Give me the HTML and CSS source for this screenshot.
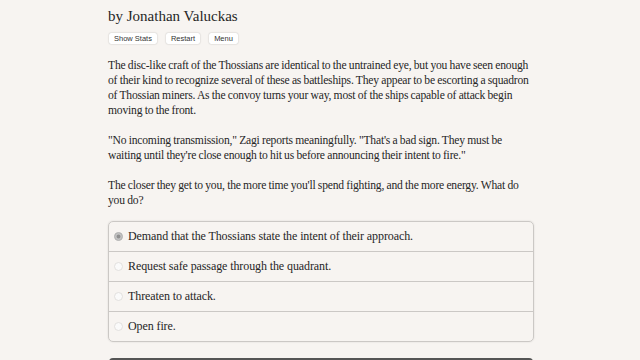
FILE: index.html
```html
<!DOCTYPE html>
<html>
<head>
<meta charset="utf-8">
<link rel="stylesheet" href="styles.css">
</head>
<body>
<div class="page">
  <div class="author">by Jonathan Valuckas</div>
  <div class="buttons">
    <button class="btn">Show Stats</button>
    <button class="btn">Restart</button>
    <button class="btn">Menu</button>
  </div>
  <div class="text">
    <p>The disc-like craft of the Thossians are identical to the untrained eye, but you have seen enough of their kind to recognize several of these as battleships. They appear to be escorting a squadron of Thossian miners. As the convoy turns your way, most of the ships capable of attack begin moving to the front.</p>
    <p>"No incoming transmission," Zagi reports meaningfully. "That's a bad sign. They must be waiting until they're close enough to hit us before announcing their intent to fire."</p>
    <p>The closer they get to you, the more time you'll spend fighting, and the more energy. What do you do?</p>
  </div>
  <div class="choices">
    <div class="choice"><span class="radio selected"></span><span>Demand that the Thossians state the intent of their approach.</span></div>
    <div class="choice"><span class="radio"></span><span>Request safe passage through the quadrant.</span></div>
    <div class="choice"><span class="radio"></span><span>Threaten to attack.</span></div>
    <div class="choice"><span class="radio"></span><span>Open fire.</span></div>
  </div>
  <div class="next"></div>
</div>
</body>
</html>
```

FILE: styles.css
```css
html, body {
  margin: 0;
  padding: 0;
  background: #f7f4f1;
  overflow: hidden;
}
.page {
  width: 426px;
  margin: 0 auto 0 108px;
  font-family: "Liberation Serif", "Times New Roman", serif;
  color: #262626;
}
.author {
  font-size: 15px;
  padding-top: 7px;
  height: 18px;
  line-height: 18px;
}
.buttons {
  display: flex;
  gap: 8px;
  margin-top: 8px;
  height: 13px;
}
.btn {
  font-family: "Liberation Sans", Arial, sans-serif;
  font-size: 7.5px;
  color: #333;
  background: #fff;
  border: none;
  border-radius: 2px;
  box-shadow: 0 0 1.5px rgba(0,0,0,0.3);
  padding: 0 5px;
  height: 11px;
  line-height: 11px;
  margin-left: 1px;
}
.text {
  margin-top: 12px;
  font-size: 11.6px;
  letter-spacing: -0.2px;
  word-spacing: -0.3px;
  line-height: 15px;
}
.text p {
  margin: 0 0 15px 0;
}
.text p:last-child {
  margin-bottom: 0;
}
.choices {
  margin-top: 13px;
  border: 1px solid #cbc8c5;
  border-radius: 5px;
  box-shadow: 0 0 2px rgba(0,0,0,0.12);
}
.choice {
  display: flex;
  align-items: center;
  height: 29px;
  font-size: 12px;
  letter-spacing: -0.1px;
  padding-left: 5px;
  gap: 5px;
  border-top: 1px solid #cbc8c5;
}
.choice:first-child {
  border-top: none;
}
.radio {
  width: 7px;
  height: 7px;
  border-radius: 50%;
  background: #fafafa;
  border: 1px solid #e2e0de;
  flex: none;
}
.radio.selected {
  background: #8f8f8f;
  border: 1px solid #bbb;
  box-shadow: inset 0 0 0 1.5px #c4c4c4;
}
.next {
  margin: 16px 1px 0;
  height: 10px;
  background: #555;
  border-radius: 4px 4px 0 0;
}
```
